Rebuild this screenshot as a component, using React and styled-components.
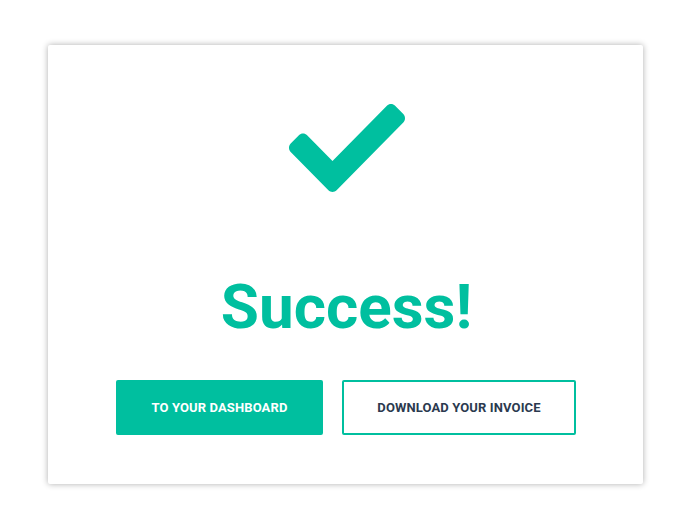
import React from "react";
import styled, { createGlobalStyle } from "styled-components";

const Global = createGlobalStyle`
  html, body { margin: 0; padding: 0; background: #ffffff; }
  body { font-family: Roboto, "Noto Sans", sans-serif; }
`;

const Page = styled.div`
  padding: 45px 0 40px;
`;

const Card = styled.div`
  width: 595px;
  margin: 0 auto;
  box-sizing: border-box;
  background: #fff;
  box-shadow: 0 0 6px rgba(0, 0, 0, 0.32);
  border-radius: 2px;
  padding: 59px 0 49px;
  display: flex;
  flex-direction: column;
  align-items: center;
`;

const Icon = styled.svg`
  width: 116px;
  height: 88px;
  display: block;
  margin-left: 2px;
`;

const Title = styled.h1`
  margin: 84px 0 0 2px;
  font-family: Roboto, sans-serif;
  font-weight: 700;
  font-size: 62px;
  line-height: 62px;
  color: #00bf9f;
`;

const Buttons = styled.div`
  display: flex;
  gap: 19px;
  margin: 42px 0 0 1px;
`;

const Button = styled.button`
  box-sizing: border-box;
  height: 55px;
  width: ${(p) => p.$w}px;
  border-radius: 2px;
  font-family: Roboto, sans-serif;
  font-weight: 700;
  font-size: 13px;
  letter-spacing: 0.12px;
  text-transform: uppercase;
  cursor: pointer;
  border: 2px solid #00bf9f;
  background: ${(p) => (p.$primary ? "#00bf9f" : "#ffffff")};
  color: ${(p) => (p.$primary ? "#ffffff" : "#2b3a4f")};
`;

export default function App() {
  return (
    <>
      <Global />
      <Page>
        <Card>
          <Icon viewBox="0 65 512 382" preserveAspectRatio="none">
            <path
              fill="#00bf9f"
              d="M173.898 439.404l-166.4-166.4c-9.997-9.997-9.997-26.206 0-36.204l36.203-36.204c9.997-9.998 26.207-9.998 36.204 0L192 312.69 432.095 72.596c9.997-9.997 26.207-9.997 36.204 0l36.203 36.204c9.997 9.997 9.997 26.206 0 36.204l-294.4 294.401c-9.998 9.997-26.207 9.997-36.204-.001z"
            />
          </Icon>
          <Title>Success!</Title>
          <Buttons>
            <Button $primary $w={207}>To your dashboard</Button>
            <Button $w={234}>Download your invoice</Button>
          </Buttons>
        </Card>
      </Page>
    </>
  );
}
